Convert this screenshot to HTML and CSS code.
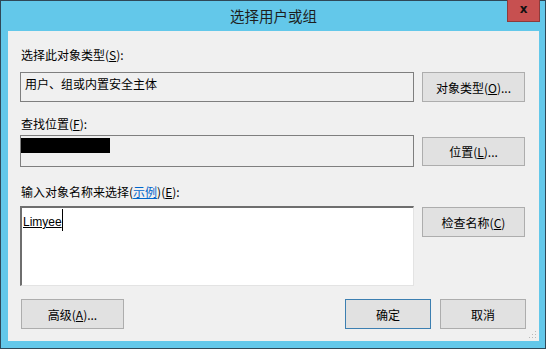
FILE: index.html
```html
<!DOCTYPE html>
<html lang="zh-CN">
<head>
    <meta charset="UTF-8">
    <meta name="viewport" content="width=device-width, initial-scale=1.0">
    <title>选择用户或组</title>
    <link rel="stylesheet" href="styles.css">
</head>
<body>
    <div class="window">
        <div class="titlebar">
            <span class="title">选择用户或组</span>
            <div class="close">x</div>
        </div>
        <div class="client">
            <div class="label label-first">选择此对象类型(<u>S</u>):</div>
            <div class="row row-first">
                <div class="field">用户、组或内置安全主体</div>
                <button class="btn">对象类型(<u>O</u>)...</button>
            </div>

            <div class="label label-second">查找位置(<u>F</u>):</div>
            <div class="row row-second">
                <div class="field field-tall"><span class="redacted"></span></div>
                <button class="btn btn-low">位置(<u>L</u>)...</button>
            </div>

            <div class="label label-third">输入对象名称来选择(<a class="link">示例</a>)(<u>E</u>):</div>
            <div class="row row-third">
                <div class="names"><span class="typed">Limyee</span><span class="caret"></span></div>
                <button class="btn btn-check">检查名称(<u>C</u>)</button>
            </div>

            <div class="footer">
                <button class="btn btn-advanced">高级(<u>A</u>)...</button>
                <div class="footer-right">
                    <button class="btn btn-small btn-default">确定</button>
                    <button class="btn btn-small">取消</button>
                </div>
            </div>
            <svg class="grip" width="8" height="8" viewBox="0 0 8 8">
                <rect x="6" y="0" width="1" height="1" fill="#b8b8b8"/>
                <rect x="3" y="3" width="1" height="1" fill="#b8b8b8"/>
                <rect x="6" y="3" width="1" height="1" fill="#b8b8b8"/>
                <rect x="0" y="6" width="1" height="1" fill="#b8b8b8"/>
                <rect x="3" y="6" width="1" height="1" fill="#b8b8b8"/>
                <rect x="6" y="6" width="1" height="1" fill="#b8b8b8"/>
            </svg>
        </div>
    </div>
</body>
</html>
```

FILE: styles.css
```css
* {
    box-sizing: border-box;
}
body {
    margin: 0;
    font-family: "Noto Sans CJK SC", "Liberation Sans", sans-serif;
    font-size: 12px;
    color: #000;
}
.window {
    width: 546px;
    height: 349px;
    border: 1px solid #2f4858;
    background-color: #63c8ea;
    padding: 0 6px 0 7px;
}
.titlebar {
    position: relative;
    height: 30px;
    text-align: center;
}
.title {
    display: inline-block;
    font-size: 14.5px;
    line-height: 30px;
    color: #1e1e1e;
}
.close {
    position: absolute;
    right: -1px;
    top: -1px;
    width: 33px;
    height: 22px;
    background-color: #c75050;
    border: 1px solid #8c3b3b;
    border-top: none;
    font-family: "DejaVu Sans", sans-serif;
    font-weight: bold;
    font-size: 12px;
    line-height: 19px;
    color: #111;
}
.client {
    position: relative;
    height: 310px;
    background-color: #f0f0f0;
    padding: 16px 13px 0 12px;
}
.label {
    line-height: 16px;
    height: 16px;
    padding-left: 1px;
}
.label u, .btn u {
    text-decoration: underline;
}
.link {
    color: #0066cc;
    text-decoration: underline;
}
.label-second {
    margin-top: 14px;
}
.label-third {
    margin-top: 17px;
}
.row {
    display: flex;
    gap: 8px;
    align-items: flex-start;
}
.row-first {
    margin-top: 9px;
}
.row-second {
    margin-top: 3px;
}
.row-third {
    margin-top: 6px;
}
.field {
    width: 394px;
    height: 30px;
    border: 1px solid #7f7f7f;
    padding: 3px 4px;
    line-height: 16px;
}
.field-tall {
    height: 32px;
    padding: 2px 0 0 0;
}
.redacted {
    display: block;
    width: 89px;
    height: 15px;
    background-color: #000;
}
.btn {
    width: 103px;
    height: 30px;
    padding: 0;
    background-color: #e1e1e1;
    border: 1px solid #adadad;
    font-family: "Noto Sans CJK SC", "Liberation Sans", sans-serif;
    font-size: 12px;
    color: #000;
}
.btn-low {
    margin-top: 2px;
    height: 29px;
}
.btn-check {
    margin-top: 1px;
}
.names {
    width: 394px;
    height: 80px;
    background-color: #fff;
    border-style: solid;
    border-width: 2px 1px 1px 2px;
    border-color: #6e6e6e #e3e3e3 #e3e3e3 #6e6e6e;
    padding: 6px 0 0 1px;
    font-family: "Liberation Sans", sans-serif;
    font-size: 12px;
    line-height: 16px;
    display: flex;
    align-items: flex-start;
}
.typed {
    text-decoration: underline;
}
.caret {
    display: inline-block;
    width: 1px;
    height: 22px;
    margin-top: -5px;
    background-color: #000;
}
.footer {
    margin-top: 13px;
    display: flex;
    justify-content: space-between;
    padding-left: 1px;
}
.footer-right {
    display: flex;
    gap: 9px;
}
.btn-small {
    width: 86px;
}
.btn-default {
    border-color: #3c7fb1;
}
.grip {
    position: absolute;
    right: 2px;
    bottom: 2px;
}
```
